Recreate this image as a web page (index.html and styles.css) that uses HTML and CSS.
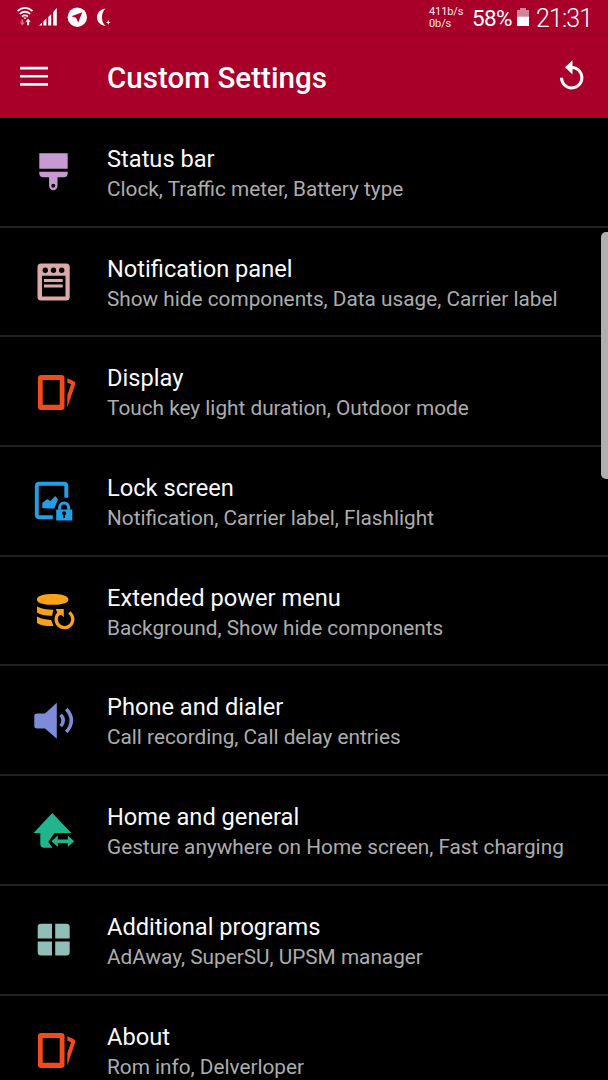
FILE: index.html
```html
<!DOCTYPE html>
<html lang="en">
<head>
<meta charset="utf-8">
<title>Custom Settings</title>
<link rel="stylesheet" href="styles.css">
</head>
<body>
<div class="screen">
  <header class="status-bar">
    <svg class="status-icons" width="120" height="36" viewBox="0 0 120 36" fill="#fff">
      <g fill="none" stroke="#fff" stroke-width="1.7">
        <path d="M17.500 11Q25 4.800 32.500 11M19.800 13.900Q25 9.600 30.200 13.900M22 16.600Q25 14.200 28 16.600"/>
      </g>
      <path d="M23.300 17.500h3.400L25 19.300z"/>
      <path d="M28.100 18.800l2.700 3h-1.700v3.400h-2v-3.400h-1.700z"/>
      <path opacity=".45" d="M22.300 25.500l-2.500-3h1.600v-3h1.800v3h1.600z"/>
      <path d="M39 25.500l3-2.700v2.700zM43.400 21.400l3-2.800v6.900h-3zM48.200 17l3-3v11.500h-3zM53.200 12l3.600-4v17.500h-3.600z"/>
      <circle cx="77.300" cy="17.200" r="9.700"/>
      <path fill="#a80029" d="M82.300 12.300L71.500 16.300L76 17.800L78.200 22.500z"/>
      <path d="M105.500 8.500C99.500 9.500 97 13.500 97 17.200S99.500 25 105.500 26C100.800 21.500 100.800 13 105.500 8.500zM108.300 20l.7 1.700 1.700.7-1.700.7-.7 1.700-.7-1.700-1.700-.7 1.700-.7z"/>
    </svg>
    <div class="traffic"><span>411b/s</span><span>0b/s</span></div>
    <span class="percent">58%</span>
    <svg class="battery" width="12" height="18" viewBox="0 0 12 18"><path fill="#d3839a" d="M0 2h3V0h6v2h3v7H0z"/><path fill="#fff" d="M0 8.700h12V18H0z"/></svg>
    <span class="clock">21:31</span>
  </header>
  <div class="app-bar">
    <svg class="menu" width="28" height="21" viewBox="0 0 28 21"><path fill="#fff" d="M0 .8h28v2.700H0zM0 8.900h28v2.700H0zM0 17h28v2.700H0z"/></svg>
    <h1 class="app-title">Custom Settings</h1>
    <svg class="reset" width="28" height="32" viewBox="0 0 28 32"><path fill="none" stroke="#fff" stroke-width="3" d="M13.300 7.500A10.200 10.200 0 1 1 3.500 17.700"/><path fill="#fff" d="M14.500.2v14.200L7 7.300z"/></svg>
  </div>
  <main class="list">
    <section class="row">
      <svg class="icon" viewBox="0 0 70 60" fill="#c79bd1"><path d="M19.300 13.300h28.400v15.500H19.300zM19.300 31.700h28.400v1.500q0 4-4 4h-6.200v8.800a4.200 4.200 0 0 1-8.400 0v-8.800h-5.800q-4 0-4-4z"/><circle cx="33.300" cy="45.700" r="2" fill="#000"/></svg>
      <div class="copy"><h2>Status bar</h2><p>Clock, Traffic meter, Battery type</p></div>
    </section>
    <section class="row">
      <svg class="icon" viewBox="0 0 70 60" fill="#dba9a7"><path fill-rule="evenodd" d="M21 13.600h25.200q3.500 0 3.500 3.500v29.800q0 3.500-3.500 3.500H21q-3.500 0-3.500-3.500V17.100q0-3.500 3.500-3.500zM22 25.700v20.800h23.500V25.700z"/><path d="M24 29h18.700v3H24zM24 34.400h18.700v3H24z"/><g fill="#000"><circle cx="25.300" cy="20.300" r="2.700"/><circle cx="33.500" cy="20.300" r="2.700"/><circle cx="41.700" cy="20.300" r="2.700"/></g></svg>
      <div class="copy"><h2>Notification panel</h2><p>Show hide components, Data usage, Carrier label</p></div>
    </section>
    <section class="row">
      <svg class="icon" viewBox="0 0 70 60" fill="#f54a1c"><path fill-rule="evenodd" d="M21 15h20.500q3 0 3 3v29q0 3-3 3H21q-3 0-3-3V18q0-3 3-3zM22.700 20v24.800h17V20z"/><path d="M47.300 18.300l6.200 2.600q2.500 1.100 1.600 3.600l-7.800 23.200V35.300l3.800-11.100-3.800-1.600z"/></svg>
      <div class="copy"><h2>Display</h2><p>Touch key light duration, Outdoor mode</p></div>
    </section>
    <section class="row">
      <svg class="icon" viewBox="0 0 70 60" fill="#229fe7"><g transform="translate(0 .7)"><path fill="none" stroke="#229fe7" stroke-width="3.900" d="M46.300 28V16.500q0-2.500-2.500-2.500H19.300q-2.500 0-2.500 2.500v28.500q0 2.500 2.500 2.500h13.500"/><path d="M22.300 38.500v-5.200l5-4 3 2 5-5 2.700 3.200-3.700 9.300zM36.200 39.700h16.100v11.200H36.200z"/><path fill="none" stroke="#229fe7" stroke-width="3" d="M39.600 40v-2.300a4.500 4.500 0 0 1 9 0V40"/><circle cx="44.100" cy="43.500" r="2" fill="#000"/><path fill="#000" d="M43.300 44h1.700v4.200h-1.700z"/></g></svg>
      <div class="copy"><h2>Lock screen</h2><p>Notification, Carrier label, Flashlight</p></div>
    </section>
    <section class="row">
      <svg class="icon" viewBox="0 0 70 60" fill="#f9a11b"><g transform="translate(0 .9)"><path d="M17 18.500C19 12.600 46.300 12.600 48.300 18.500V20.500C46.300 26.400 19 26.400 17 20.500zM17 26.500q7 3.400 16.300 3.300l-1.200 6q-9.500.3-15.100-3.300zM17 36.700q6 3.200 14.200 3.300l2.300 6.200q-10.700.3-16.500-3.200z"/><path fill="none" stroke="#f9a11b" stroke-width="3.300" d="M49.200 32.600A8.300 8.300 0 1 1 38.700 33.500"/><path d="M35.800 29.200h8v8.200l-2.600-2.600-2.700 1.100z"/></g></svg>
      <div class="copy"><h2>Extended power menu</h2><p>Background, Show hide components</p></div>
    </section>
    <section class="row">
      <svg class="icon" viewBox="0 0 70 60" fill="#7d8cd8"><g transform="translate(0 .7)"><path d="M17 23.800h8L36.800 13v36L25 38.700h-8q-2.700 0-2.700-2.500V26.300q0-2.500 2.700-2.500z"/><path fill="none" stroke="#7d8cd8" stroke-width="3.500" d="M40.700 25q5.200 5.500 0 11.500M46.300 19.300q10.200 11.200 0 23"/></g></svg>
      <div class="copy"><h2>Phone and dialer</h2><p>Call recording, Call delay entries</p></div>
    </section>
    <section class="row">
      <svg class="icon" viewBox="0 0 70 60" fill="#20b58c"><g transform="translate(0 1.700)"><path d="M32.300 13.300L51.300 33.300H34.500l-6.200 8.700 4 6H24q-3.700 0-3.700-3.700V33.300H13.500z"/><path d="M31.500 41.600l6.300-5.800v4h10v-4l6.300 5.800-6.300 5.800v-4h-10v4z"/></g></svg>
      <div class="copy"><h2>Home and general</h2><p>Gesture anywhere on Home screen, Fast charging</p></div>
    </section>
    <section class="row">
      <svg class="icon" viewBox="0 0 70 60" fill="#8fbfb6"><path d="M32 15.800H21q-3.300 0-3.300 3.300v11.400H32zM35.200 15.800h11.200q3.300 0 3.300 3.300v11.400H35.200zM17.700 33.500H32V47.500H21q-3.300 0-3.300-3.300zM35.200 33.500h14.500v10.700q0 3.300-3.300 3.300H35.200z"/></svg>
      <div class="copy"><h2>Additional programs</h2><p>AdAway, SuperSU, UPSM manager</p></div>
    </section>
    <section class="row">
      <svg class="icon" viewBox="0 0 70 60" fill="#f54a1c"><path fill-rule="evenodd" d="M21 15h20.500q3 0 3 3v29q0 3-3 3H21q-3 0-3-3V18q0-3 3-3zM22.700 20v24.800h17V20z"/><path d="M47.300 18.300l6.200 2.600q2.500 1.100 1.600 3.600l-7.800 23.200V35.300l3.800-11.100-3.800-1.600z"/></svg>
      <div class="copy"><h2>About</h2><p>Rom info, Delverloper</p></div>
    </section>
  </main>
  <div class="scrollbar"></div>
</div>
</body>
</html>
```
FILE: styles.css
```css
* { box-sizing: border-box; }
body { margin: 0; background: #000; font-family: Roboto, sans-serif; overflow: hidden; }
h1, h2, p { margin: 0; font-weight: 400; white-space: nowrap; }
svg { display: block; flex: none; }
.screen { position: relative; width: 608px; height: 1080px; overflow: hidden; }
.status-bar { display: flex; height: 36px; color: #fff; background: linear-gradient(#a80029 32px, #980025 35px, #a80029 36px); }
.traffic { display: flex; flex-direction: column; margin: 6px 0 0 auto; width: 43px; font-size: 11px; line-height: 12px; letter-spacing: -.1px; color: #ffe9ee; }
.percent { width: 45px; font-size: 22.500px; line-height: 37px; letter-spacing: -.7px; white-space: nowrap; }
.battery { margin-top: 8px; }
.clock { width: 72px; margin-left: 7px; font-size: 25px; line-height: 37px; letter-spacing: -.9px; font-weight: 300; }
.app-bar { display: flex; height: 82px; padding: 0 22px 0 20px; background: #a80029; color: #fff; }
.menu { margin-top: 30px; }
.app-title { margin-left: 59px; font-size: 29.600px; line-height: 84px; font-weight: 500; }
.reset { margin: 24px 0 0 auto; }
.row { display: flex; height: 109.700px; padding-left: 20px; border-bottom: 2px solid #202020; }
.icon { width: 70px; height: 60px; margin-top: 22.300px; }
.copy { margin-left: 17px; padding-top: 26.050px; }
.copy h2 { font-size: 23.650px; line-height: 30px; color: #fafafa; }
.copy p { font-size: 20.780px; line-height: 30px; color: #adadad; }
.scrollbar { position: absolute; right: -4px; top: 232px; width: 11px; height: 247px; border-radius: 5px; background: rgba(190, 190, 190, .92); }
```
